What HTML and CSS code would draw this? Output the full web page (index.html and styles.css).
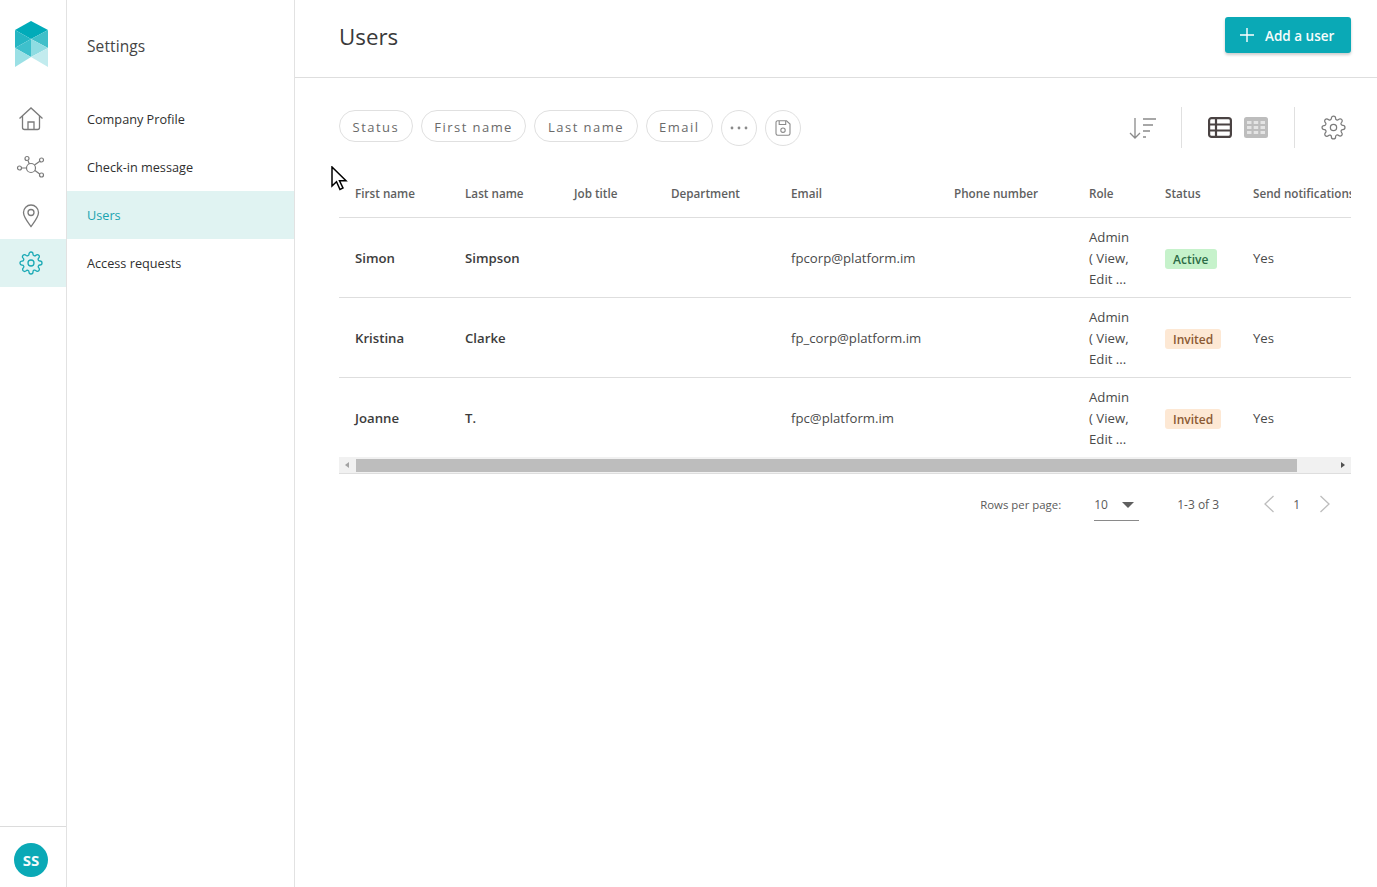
FILE: index.html
```html
<!DOCTYPE html>
<html lang="en">
<head>
<meta charset="utf-8">
<title>Users</title>
<link rel="stylesheet" href="styles.css">
</head>
<body>
<div class="app">
  <nav class="rail">
    <svg class="logo" width="36" height="50" viewBox="0 0 36 50">
      <polygon points="17,1 34,10 17,19 1,10" fill="#00abb9"/>
      <polygon points="1,10 17,19 1,28" fill="#25b6c3"/>
      <polygon points="34,10 17,19 34,28" fill="#40bfc9"/>
      <polygon points="17,19 1,28 17,37" fill="#3ec0cc"/>
      <polygon points="17,19 34,28 17,37" fill="#8edce2"/>
      <polygon points="1,28 17,37 1,47" fill="#9be0e5"/>
      <polygon points="34,28 17,37 34,47" fill="#c2ebee"/>
    </svg>
    <a class="rail-item">
      <svg width="26" height="26" viewBox="0 0 26 26" fill="none" stroke="#7b7b7b" stroke-width="1.300"><path d="M1.500 12.500 13 2l11.500 10.500"/><path d="M4.500 10v11.500a2 2 0 0 0 2 2h13a2 2 0 0 0 2-2V10"/><path d="M10 23.500V16h6v7.500"/></svg>
    </a>
    <a class="rail-item rail-net">
      <svg width="30" height="26" viewBox="0 0 30 26" fill="none" stroke="#7b7b7b" stroke-width="1.200"><circle cx="15" cy="13" r="4.500"/><circle cx="11" cy="3.500" r="2"/><circle cx="25.500" cy="5" r="2"/><circle cx="3.500" cy="13" r="2"/><circle cx="25.500" cy="20" r="2"/><path d="m12 5.500 1.300 3.500M23.800 6.200 18.500 10M5.500 13H10.500M23.700 19 19 15.500"/></svg>
    </a>
    <a class="rail-item">
      <svg width="22" height="26" viewBox="0 0 22 26" fill="none" stroke="#7b7b7b" stroke-width="1.300"><path d="M11 24.500C7 19 3.500 15 3.500 10.500a7.500 7.500 0 0 1 15 0c0 4.500-3.500 8.500-7.500 14Z"/><circle cx="11" cy="10.500" r="3"/></svg>
    </a>
    <a class="rail-item rail-active">
      <svg class="gear" width="24" height="24" viewBox="0 0 24 24" fill="none" stroke="#1aa9b5" stroke-width="1.300"><circle cx="12" cy="12" r="3"/><path d="M19.400 15a1.650 1.650 0 0 0 .33 1.820l.06.06a2 2 0 1 1-2.830 2.830l-.06-.06a1.650 1.650 0 0 0-2.900 1.170V21a2 2 0 1 1-4 0v-.09a1.650 1.650 0 0 0-2.900-1.080l-.06.06a2 2 0 1 1-2.830-2.830l.06-.06a1.650 1.650 0 0 0-1.170-2.900H3a2 2 0 1 1 0-4h.09a1.650 1.650 0 0 0 1.080-2.900l-.06-.06a2 2 0 1 1 2.830-2.830l.06.06a1.650 1.650 0 0 0 1.820.33H9a1.650 1.650 0 0 0 1-1.510V3a2 2 0 1 1 4 0v.09a1.650 1.650 0 0 0 2.900 1.170l.06-.06a2 2 0 1 1 2.830 2.830l-.06.06a1.650 1.650 0 0 0 1.170 2.900H21a2 2 0 1 1 0 4h-.09a1.650 1.650 0 0 0-1.510 1Z"/></svg>
    </a>
    <div class="rail-foot"><span class="avatar">SS</span></div>
  </nav>

  <aside class="subnav">
    <h2 class="subnav-title">Settings</h2>
    <ul class="subnav-list">
      <li class="subnav-item">Company Profile</li>
      <li class="subnav-item">Check-in message</li>
      <li class="subnav-item subnav-active">Users</li>
      <li class="subnav-item">Access requests</li>
    </ul>
  </aside>

  <main class="main">
    <header class="topbar">
      <h1 class="page-title">Users</h1>
      <button class="add-btn">
        <svg width="14" height="14" viewBox="0 0 14 14" stroke="#fff" stroke-width="1.400"><path d="M7 0v14M0 7h14"/></svg>
        <span class="add-label">Add a user</span>
      </button>
    </header>

    <section class="content">
      <div class="toolbar">
        <div class="chips">
          <span class="chip">Status</span>
          <span class="chip">First name</span>
          <span class="chip">Last name</span>
          <span class="chip">Email</span>
          <span class="round-btn"><svg width="20" height="4" viewBox="0 0 20 4" fill="#8a8a8a"><circle cx="3" cy="2" r="1.400"/><circle cx="10" cy="2" r="1.400"/><circle cx="17" cy="2" r="1.400"/></svg></span>
          <span class="round-btn"><svg width="16" height="16" viewBox="0 0 16 16" fill="none" stroke="#8a8a8a" stroke-width="1.100"><path d="M3 .8h8.500L15 4v9.500a1.700 1.700 0 0 1-1.700 1.700H2.700A1.700 1.700 0 0 1 1 13.500V2.500A1.700 1.700 0 0 1 3 .8Z"/><path d="M4.200 1v3.500h6.500V1"/><circle cx="8" cy="10.200" r="2.200"/></svg></span>
        </div>
        <div class="tools">
          <svg class="tool-sort" width="28" height="24" viewBox="0 0 28 24" fill="none" stroke="#8a8a8a" stroke-width="1.300"><path d="M6 2v20M1 17l5 5 5-5"/><path d="M14 3h13M14 9h10M14 15h7M14 21h3"/></svg>
          <span class="tool-sep"></span>
          <svg class="tool-list" width="24" height="21" viewBox="0 0 24 21" fill="none" stroke="#4a4343" stroke-width="2.200"><rect x="1.100" y="1.100" width="21.800" height="18.800" rx="2.500"/><path d="M1 7.500h22M1 13.500h22M8 1v19"/></svg>
          <svg class="tool-grid" width="24" height="21" viewBox="0 0 24 21"><rect width="24" height="21" rx="2.500" fill="#bdbdbd"/><g fill="#e4e4e4"><rect x="3" y="4" width="4.500" height="3"/><rect x="9.700" y="4" width="4.500" height="3"/><rect x="16.500" y="4" width="4.500" height="3"/><rect x="3" y="9" width="4.500" height="3"/><rect x="9.700" y="9" width="4.500" height="3"/><rect x="16.500" y="9" width="4.500" height="3"/><rect x="3" y="14" width="4.500" height="3"/><rect x="9.700" y="14" width="4.500" height="3"/><rect x="16.500" y="14" width="4.500" height="3"/></g></svg>
          <span class="tool-sep"></span>
          <svg class="tool-gear" width="25" height="25" viewBox="0 0 24 24" fill="none" stroke="#7b7b7b" stroke-width="1.200"><circle cx="12" cy="12" r="3"/><path d="M19.400 15a1.650 1.650 0 0 0 .33 1.820l.06.06a2 2 0 1 1-2.830 2.830l-.06-.06a1.650 1.650 0 0 0-2.900 1.170V21a2 2 0 1 1-4 0v-.09a1.650 1.650 0 0 0-2.900-1.080l-.06.06a2 2 0 1 1-2.830-2.830l.06-.06a1.650 1.650 0 0 0-1.170-2.900H3a2 2 0 1 1 0-4h.09a1.650 1.650 0 0 0 1.080-2.900l-.06-.06a2 2 0 1 1 2.830-2.830l.06.06a1.650 1.650 0 0 0 1.820.33H9a1.650 1.650 0 0 0 1-1.510V3a2 2 0 1 1 4 0v.09a1.650 1.650 0 0 0 2.900 1.170l.06-.06a2 2 0 1 1 2.830 2.830l-.06.06a1.650 1.650 0 0 0 1.170 2.900H21a2 2 0 1 1 0 4h-.09a1.650 1.650 0 0 0-1.510 1Z"/></svg>
        </div>
      </div>

      <div class="table">
        <div class="row head">
          <div>First name</div><div>Last name</div><div>Job title</div><div>Department</div><div>Email</div><div>Phone number</div><div>Role</div><div>Status</div><div>Send notifications</div>
        </div>
        <div class="row body">
          <div class="name">Simon</div><div class="name">Simpson</div><div></div><div></div><div>fpcorp@platform.im</div><div></div><div class="role">Admin<br>( View,<br>Edit ...</div><div><span class="badge active">Active</span></div><div>Yes</div>
        </div>
        <div class="row body">
          <div class="name">Kristina</div><div class="name">Clarke</div><div></div><div></div><div>fp_corp@platform.im</div><div></div><div class="role">Admin<br>( View,<br>Edit ...</div><div><span class="badge invited">Invited</span></div><div>Yes</div>
        </div>
        <div class="row body last">
          <div class="name">Joanne</div><div class="name">T.</div><div></div><div></div><div>fpc@platform.im</div><div></div><div class="role">Admin<br>( View,<br>Edit ...</div><div><span class="badge invited">Invited</span></div><div>Yes</div>
        </div>
      </div>

      <div class="scrollbar">
        <span class="arrow-left"></span>
        <span class="thumb"></span>
        <span class="arrow-right"></span>
      </div>

      <div class="pager">
        <span class="rows-label">Rows per page:</span>
        <span class="rows-select">10<span class="caret"></span></span>
        <span class="range">1-3 of 3</span>
        <svg class="chev-l" width="12" height="18" viewBox="0 0 12 18" fill="none" stroke="#bdbdbd" stroke-width="1.300"><path d="M10.500 1 2 9l8.500 8"/></svg>
        <span class="page-num">1</span>
        <svg class="chev-r" width="12" height="18" viewBox="0 0 12 18" fill="none" stroke="#bdbdbd" stroke-width="1.300"><path d="M1.500 1 10 9l-8.500 8"/></svg>
      </div>
    </section>
  </main>
</div>
<svg class="cursor" width="17" height="26" viewBox="0 0 17 26"><path d="M1 1v19l4.500-4.300L9 23.500l3-1.500-3.500-7.300H15Z" fill="#fff" stroke="#000" stroke-width="1.500"/></svg>
</body>
</html>
```
FILE: styles.css
```css
* { box-sizing: border-box; }
html, body { margin: 0; height: 100%; }
body { font-family: "Open Sans", "Noto Sans", "Liberation Sans", sans-serif; color: #3c3c3c; background: #fff; overflow: hidden; }
.app { display: flex; height: 887px; }

.rail { width: 67px; flex: none; border-right: 1px solid #e2e2e2; display: flex; flex-direction: column; align-items: stretch; }
.logo { display: block; margin: 20px 0 25px 14px; }
.rail-item { height: 48px; display: flex; align-items: center; justify-content: center; padding-right: 4px; }
.rail-net { padding-top: 2px; }
.rail-active { background: #e0f3f2; }
.rail-foot { margin-top: auto; height: 61px; border-top: 1px solid #dcdcdc; display: flex; align-items: center; justify-content: center; padding: 6px 4px 0 0; }
.avatar { width: 34px; height: 34px; border-radius: 50%; background: #0aa9b6; color: #f4fbfb; font-size: 15px; font-weight: 700; display: flex; align-items: center; justify-content: center; }

.subnav { width: 228px; flex: none; border-right: 1px solid #e2e2e2; }
.subnav-title { margin: 0; padding: 36px 0 0 20px; height: 95px; font-size: 15.500px; font-weight: 400; letter-spacing: .1px; line-height: 21px; color: #444; }
.subnav-list { list-style: none; margin: 0; padding: 0; }
.subnav-item { height: 48px; display: flex; align-items: center; padding-left: 20px; font-size: 12.700px; color: #2f2f2f; }
.subnav-active { background: #e0f3f2; color: #1aa3b0; }

.main { flex: 1; min-width: 0; display: flex; flex-direction: column; }
.topbar { height: 78px; flex: none; border-bottom: 1px solid #dedede; display: flex; align-items: center; justify-content: space-between; padding: 0 26px 4px 44px; }
.page-title { margin: 0; font-size: 22.300px; font-weight: 400; color: #3a3a3a; line-height: 30px; }
.add-btn { width: 126px; height: 36px; margin-top: -4px; border: 0; border-radius: 3px; background: #0aa9b6; color: #f6fcfc; box-shadow: 0 2px 3px rgba(0,0,0,.2); font: 600 13.500px "Open Sans", sans-serif; display: flex; align-items: center; gap: 11px; padding: 0 0 0 15px; }
.add-label { padding-top: 2px; }

.content { padding: 32px 26px 0 44px; }
.toolbar { display: flex; justify-content: space-between; align-items: flex-start; height: 60px; }
.chips { display: flex; gap: 8px; align-items: flex-start; }
.chip { height: 32px; padding: 1px 12.620px 0; border: 1px solid #e0e0e0; border-radius: 16px; font-size: 13px; letter-spacing: 1.450px; color: #6a6a6a; display: flex; align-items: center; }
.round-btn { width: 36px; height: 36px; border: 1px solid #e0e0e0; border-radius: 50%; display: flex; align-items: center; justify-content: center; }
.tools { display: flex; align-items: center; height: 41px; margin-top: -3px; }
.tool-sort { margin-right: 24px; }
.tool-sep { width: 1px; height: 41px; background: #e0e0e0; }
.tool-list { margin-left: 26px; }
.tool-grid { margin-left: 12px; margin-right: 26px; }
.tool-gear { margin-left: 26px; margin-right: 5px; }

.table { overflow: hidden; }
.row { display: grid; grid-template-columns: 110px 109px 97px 120px 163px 135px 76px 88px 140px; align-items: center; white-space: nowrap; }
.row > div { padding-left: 16px; }
.head { height: 48px; padding-bottom: 2px; border-bottom: 1px solid #dedede; font-size: 11.700px; font-weight: 600; color: #5f5f5f; }
.body { height: 80px; border-bottom: 1px solid #dedede; font-size: 13.200px; color: #4a4a4a; }
.body.last { border-bottom: 0; }
.name { font-weight: 600; color: #3c3c3c; }
.role { line-height: 21px; padding-top: 1px; }
.badge { display: inline-block; height: 20px; line-height: 21px; padding: 0 8px; border-radius: 3px; font-size: 12px; font-weight: 600; margin-top: 2px; }
.active { background: #c6f2cb; color: #2c6b46; width: 52px; }
.invited { background: #fde8d4; color: #8b5a33; }

.scrollbar { height: 17px; background: #f1f1f1; border-bottom: 1px solid #dedede; display: flex; align-items: center; margin-top: -1px; }
.arrow-left { width: 0; height: 0; margin-left: 6px; border: 3.500px solid transparent; border-left: 0; border-right: 4px solid #a3a3a3; }
.thumb { height: 13px; width: 941px; margin-left: 7px; background: #bdbdbd; }
.arrow-right { width: 0; height: 0; margin-left: 44px; border: 3.500px solid transparent; border-right: 0; border-left: 4px solid #505050; }

.pager { display: flex; align-items: center; justify-content: flex-end; height: 60px; font-size: 12px; color: #5a5a5a; }
.rows-label { font-size: 11.400px; }
.rows-select { width: 45px; height: 32px; margin-left: 33px; border-bottom: 1px solid #8a8a8a; display: flex; align-items: center; justify-content: space-between; padding: 0 5px 0 0; margin-top: 2px; }
.caret { width: 0; height: 0; border: 6.500px solid transparent; border-bottom: 0; border-top: 6.500px solid #5f5f5f; }
.range { margin-left: 38px; }
.chev-l { margin-left: 44px; }
.page-num { margin-left: 18px; }
.chev-r { margin-left: 19px; margin-right: 20px; }

.cursor { position: absolute; left: 331px; top: 166px; }
```
